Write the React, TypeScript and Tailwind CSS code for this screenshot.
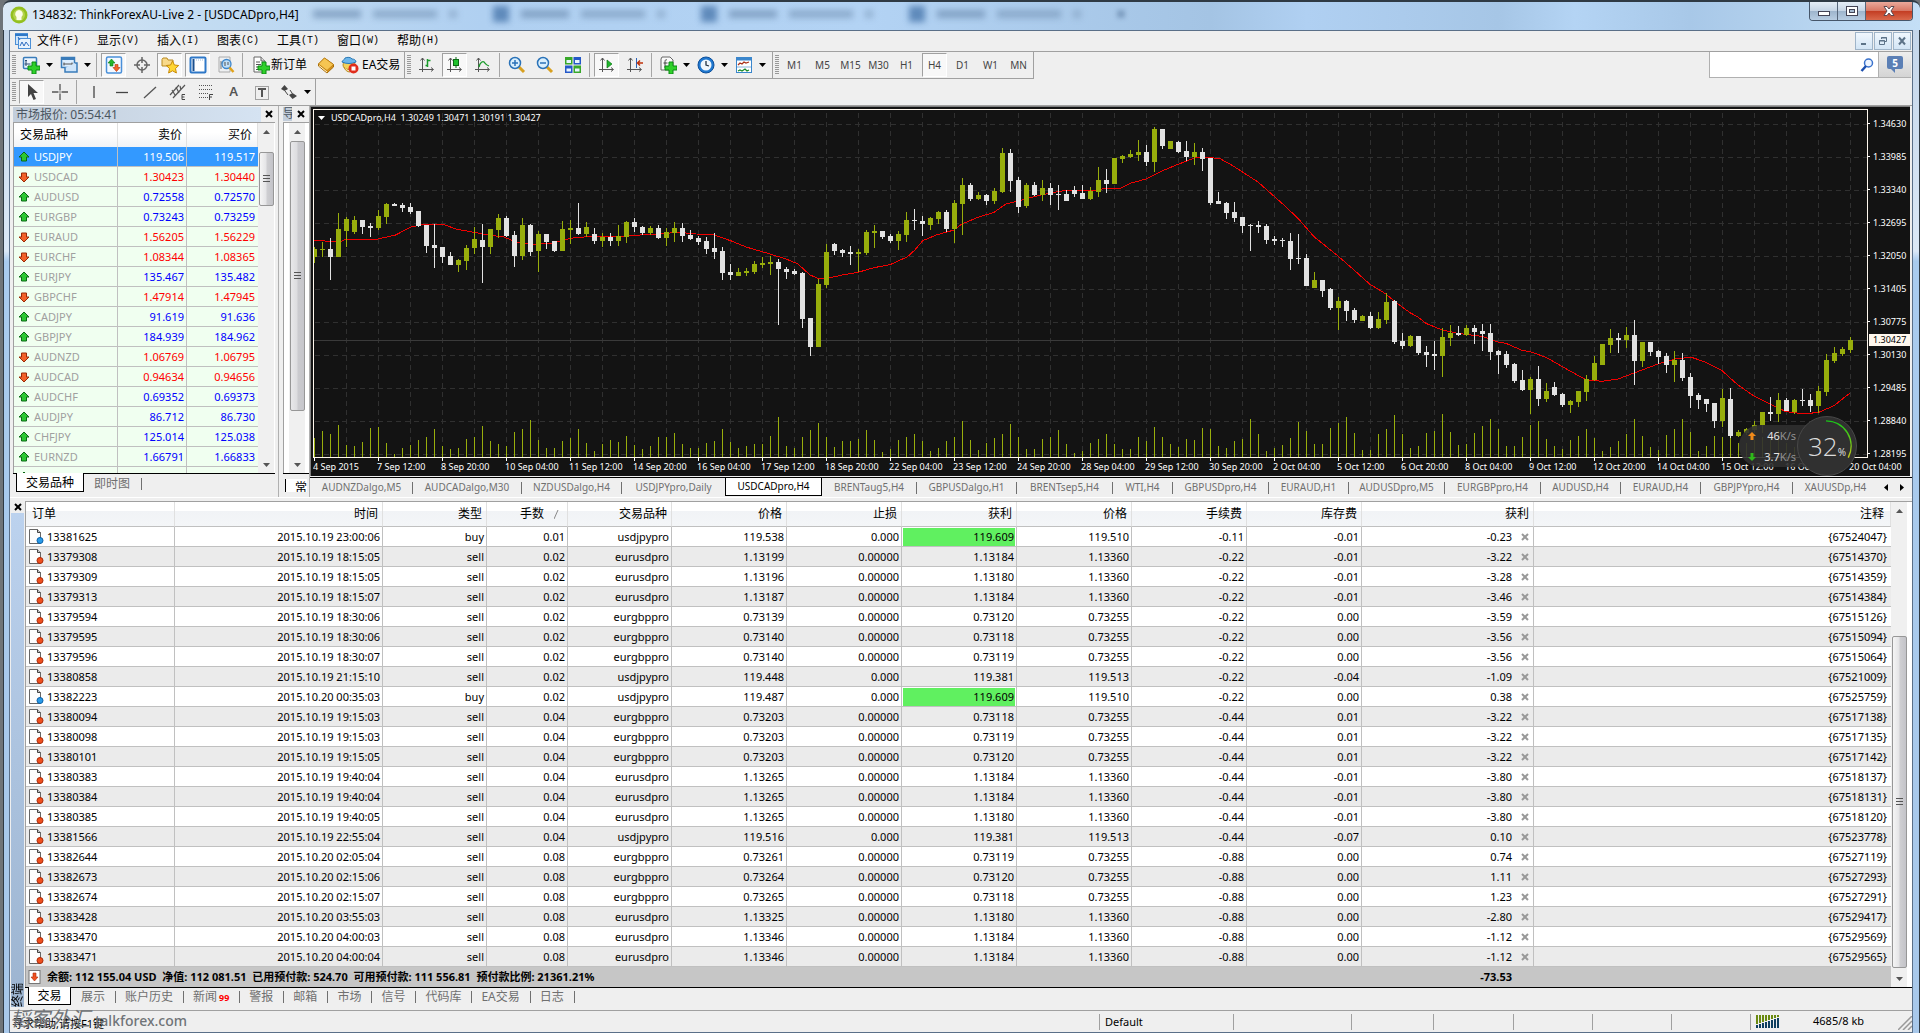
import React from "react";

type Candle = [kind: "u" | "d", high: number, top: number, bottom: number, low: number, volume: number];

/* Chart data: vertical values are in thirds of a pixel below the pane's base line. */
const CANDLES: Candle[] = [
  ["u", 440, 447, 471, 488, 1015], ["u", 427, 447, 450, 471, 993], ["d", 414, 447, 471, 540, 1002], ["u", 339, 387, 471, 471, 975],
  ["u", 351, 357, 393, 441, 1035], ["u", 348, 360, 396, 402, 1038], ["d", 360, 360, 381, 402, 1026], ["d", 369, 378, 384, 411, 984],
  ["u", 330, 348, 384, 390, 981], ["u", 309, 312, 351, 372, 1030], ["d", 309, 312, 318, 318, 1062], ["d", 309, 315, 324, 336, 1045],
  ["d", 309, 321, 336, 342, 1035], ["d", 333, 333, 378, 381, 1020], ["d", 375, 375, 438, 459, 1011], ["d", 372, 435, 444, 504, 987],
  ["d", 441, 441, 471, 489, 1038], ["d", 456, 468, 495, 495, 1047], ["u", 477, 480, 495, 516, 1044], ["u", 435, 444, 483, 510, 1017],
  ["u", 381, 417, 444, 462, 1011], ["d", 372, 420, 441, 549, 978], ["u", 387, 387, 441, 462, 1023], ["u", 342, 354, 390, 414, 1032],
  ["d", 348, 354, 408, 411, 1038], ["d", 393, 405, 468, 501, 996], ["u", 354, 375, 468, 480, 987], ["d", 372, 375, 456, 468, 960],
  ["u", 393, 402, 453, 516, 1020], ["d", 402, 402, 426, 447, 1044], ["d", 423, 423, 453, 456, 1045], ["u", 363, 387, 453, 453, 1023],
  ["u", 360, 384, 390, 432, 1014], ["d", 309, 384, 402, 405, 987], ["u", 366, 381, 402, 411, 1029], ["d", 384, 402, 423, 432, 1053],
  ["u", 399, 411, 423, 441, 1032], ["d", 399, 411, 423, 438, 1020], ["u", 375, 408, 423, 438, 1026], ["u", 363, 366, 411, 429, 1008],
  ["d", 354, 366, 381, 396, 1035], ["d", 378, 381, 399, 405, 1047], ["u", 378, 384, 399, 405, 1038], ["d", 375, 384, 414, 417, 1011],
  ["u", 384, 396, 414, 438, 1011], ["u", 366, 384, 399, 426, 999], ["d", 369, 384, 408, 426, 1032], ["d", 390, 405, 417, 420, 1044],
  ["d", 408, 414, 426, 435, 1044], ["d", 411, 423, 447, 462, 1029], ["d", 399, 444, 456, 477, 1023], ["d", 441, 453, 519, 540, 987],
  ["d", 492, 516, 525, 540, 1026], ["u", 504, 516, 528, 528, 1044], ["u", 504, 513, 519, 528, 1038], ["u", 483, 492, 516, 522, 1032],
  ["u", 471, 489, 495, 504, 1032], ["u", 468, 486, 492, 525, 1008], ["d", 477, 486, 507, 675, 951], ["d", 501, 507, 516, 537, 1038],
  ["d", 507, 513, 522, 525, 1044], ["d", 516, 519, 657, 684, 1011], ["d", 654, 654, 741, 768, 990], ["u", 537, 552, 741, 741, 969],
  ["u", 432, 456, 555, 564, 1011], ["d", 429, 432, 453, 465, 1041], ["d", 447, 450, 459, 471, 1023], ["d", 438, 456, 462, 495, 1023],
  ["u", 447, 456, 462, 516, 1017], ["u", 390, 396, 459, 465, 990], ["u", 375, 393, 399, 444, 1020], ["d", 393, 393, 411, 417, 1056],
  ["d", 402, 408, 423, 429, 1047], ["u", 393, 402, 423, 450, 1020], ["u", 336, 360, 405, 426, 1011], ["d", 327, 360, 363, 390, 1002],
  ["d", 348, 363, 372, 408, 1023], ["u", 351, 354, 375, 390, 1053], ["u", 333, 336, 357, 372, 1044], ["d", 330, 336, 387, 396, 1023],
  ["u", 300, 309, 387, 429, 1011], ["u", 234, 255, 312, 405, 963], ["d", 249, 255, 297, 303, 1020], ["u", 276, 285, 297, 300, 1050],
  ["d", 282, 285, 303, 315, 1029], ["u", 264, 273, 303, 312, 1014], ["u", 144, 159, 276, 279, 1002], ["d", 147, 159, 243, 276, 972],
  ["d", 231, 240, 321, 339, 1011], ["u", 249, 255, 318, 324, 1047], ["d", 246, 255, 285, 288, 1047], ["u", 240, 264, 285, 303, 1017],
  ["d", 249, 264, 285, 315, 1011], ["d", 255, 282, 285, 330, 990], ["d", 270, 282, 303, 303, 1032], ["d", 258, 270, 282, 291, 1059],
  ["d", 255, 279, 297, 297, 1053], ["u", 261, 273, 297, 300, 1029], ["u", 201, 240, 276, 291, 1017], ["d", 207, 240, 252, 279, 1002],
  ["u", 174, 174, 252, 252, 1032], ["u", 165, 168, 177, 189, 1047], ["u", 150, 162, 171, 174, 1047], ["u", 120, 156, 165, 183, 1011],
  ["d", 135, 156, 186, 198, 1023], ["u", 81, 87, 186, 216, 981], ["d", 87, 87, 138, 147, 1011], ["u", 123, 123, 147, 147, 1032],
  ["d", 123, 126, 156, 159, 1041], ["d", 123, 153, 171, 183, 1017], ["u", 129, 156, 171, 195, 1020], ["d", 144, 156, 177, 213, 984],
  ["d", 174, 174, 309, 315, 987], ["d", 276, 303, 312, 312, 1038], ["d", 306, 309, 339, 357, 1044], ["d", 306, 336, 354, 366, 1023],
  ["d", 351, 351, 378, 399, 1017], ["d", 372, 375, 378, 453, 957], ["d", 363, 375, 381, 399, 1002], ["d", 372, 378, 420, 432, 1053],
  ["d", 408, 417, 423, 435, 1045], ["d", 414, 420, 423, 441, 1035], ["d", 399, 423, 477, 510, 1014], ["d", 402, 474, 477, 492, 966],
  ["d", 462, 474, 558, 558, 993], ["u", 516, 540, 564, 564, 1032], ["d", 540, 540, 573, 591, 1032], ["d", 564, 567, 624, 630, 984],
  ["u", 591, 603, 624, 690, 969], ["d", 600, 603, 633, 663, 951], ["d", 624, 630, 660, 669, 999], ["u", 645, 648, 663, 663, 1050],
  ["d", 636, 648, 684, 687, 1050], ["u", 636, 657, 684, 687, 1002], ["u", 579, 606, 660, 672, 987], ["d", 600, 603, 726, 732, 945],
  ["d", 699, 723, 738, 747, 1002], ["u", 705, 708, 738, 741, 1044], ["d", 708, 708, 759, 765, 1038], ["d", 738, 756, 765, 801, 999],
  ["d", 723, 762, 768, 810, 993], ["u", 684, 711, 768, 831, 942], ["u", 675, 699, 714, 738, 996], ["d", 678, 699, 705, 708, 1035],
  ["u", 675, 684, 705, 708, 1032], ["d", 675, 684, 696, 732, 999], ["d", 672, 693, 702, 753, 978], ["d", 672, 699, 756, 780, 957],
  ["d", 750, 753, 765, 822, 987], ["d", 753, 762, 795, 804, 1038], ["d", 789, 792, 843, 849, 1038], ["d", 810, 840, 870, 873, 1011],
  ["u", 831, 837, 870, 942, 975], ["d", 798, 837, 897, 918, 963], ["u", 849, 873, 897, 906, 1017], ["d", 846, 861, 885, 888, 1038],
  ["d", 879, 882, 915, 921, 1047], ["u", 900, 903, 915, 939, 1020], ["u", 873, 873, 906, 921, 1008], ["u", 825, 837, 876, 903, 987],
  ["u", 768, 789, 840, 843, 1014], ["u", 732, 732, 795, 795, 1053], ["u", 687, 714, 735, 759, 1041], ["d", 699, 714, 720, 759, 1023],
  ["u", 681, 705, 720, 744, 1002], ["d", 660, 705, 783, 855, 957], ["u", 726, 726, 783, 801, 1008], ["d", 726, 726, 756, 768, 1041],
  ["d", 750, 753, 771, 792, 1050], ["d", 759, 768, 795, 819, 1005], ["u", 753, 780, 795, 846, 987], ["d", 759, 780, 834, 843, 957],
  ["d", 819, 831, 888, 924, 996], ["d", 879, 885, 900, 927, 1053], ["d", 897, 897, 912, 936, 1038], ["d", 909, 909, 963, 984, 1008],
  ["u", 867, 894, 963, 981, 1011], ["d", 864, 897, 1008, 1014, 1005], ["u", 990, 996, 1008, 1011, 1030], ["u", 984, 987, 999, 1005, 1030],
  ["u", 963, 975, 990, 999, 1020], ["u", 936, 936, 975, 999, 1010], ["d", 891, 936, 942, 963, 1010], ["u", 879, 900, 942, 966, 990],
  ["d", 894, 900, 933, 933, 1030], ["u", 897, 900, 936, 942, 1040], ["d", 867, 900, 903, 918, 1020], ["d", 882, 900, 918, 936, 1030],
  ["u", 858, 873, 918, 939, 1010], ["u", 762, 780, 876, 888, 1000], ["u", 741, 759, 783, 789, 1035], ["u", 741, 747, 762, 768, 1045],
  ["u", 711, 720, 750, 759, 1055],
];

const AVERAGE: [index: number, value: number][] = [
  [0, 421], [2, 424], [3.5, 423], [4, 417], [8, 417], [10.2, 405], [12.1, 381], [13.7, 373], [16.1, 373], [17.9, 388], [20, 397], [22, 406],
  [23.7, 411], [25.5, 428], [27.5, 433], [30, 429], [32, 415], [35, 408], [38, 411], [40, 406], [43, 402], [45.6, 397], [47.8, 402], [50, 405],
  [52.3, 424], [54, 441], [57, 462], [59, 477], [60.5, 492], [62, 525], [63, 535], [64, 536], [66, 525], [68, 517], [70, 503], [72, 494],
  [74.2, 470], [75.1, 450], [76.1, 422], [77.8, 405], [80, 390], [81, 372], [83, 352], [85, 337], [86.5, 312], [88, 303], [90, 290], [92, 279],
  [94, 271], [97, 273], [98.8, 266], [100.6, 267], [102, 250], [104, 237], [106, 213], [108, 193], [110.4, 171], [113.2, 175], [114.9, 198],
  [118, 246], [121, 310], [123, 355], [125, 410], [128, 468], [130, 510], [132, 553], [134, 582], [135, 603], [137, 638], [138, 651], [139, 670],
  [141, 690], [143, 700], [146, 709], [148, 726], [149, 730], [151, 751], [152, 755], [154, 772], [157, 813], [159, 839], [161, 844], [163, 837],
  [165, 819], [168, 792], [170.3, 776], [172.2, 772], [174, 787], [176, 812], [178, 855], [180, 888], [182, 912], [184, 935], [186, 941],
  [188, 938], [190, 917], [192, 879],
];

const PRICES = ["1.34630", "1.33985", "1.33340", "1.32695", "1.32050", "1.31405", "1.30775", "1.30130", "1.29485", "1.28840", "1.28195"];
const DATES = [
  "4 Sep 2015", "7 Sep 12:00", "8 Sep 20:00", "10 Sep 04:00", "11 Sep 12:00", "14 Sep 20:00", "16 Sep 04:00", "17 Sep 12:00", "18 Sep 20:00",
  "22 Sep 04:00", "23 Sep 12:00", "24 Sep 20:00", "28 Sep 04:00", "29 Sep 12:00", "30 Sep 20:00", "2 Oct 04:00", "5 Oct 12:00", "6 Oct 20:00",
  "8 Oct 04:00", "9 Oct 12:00", "12 Oct 20:00", "14 Oct 04:00", "15 Oct 12:00", "16 Oct 20:00", "20 Oct 04:00",
];

const CHART_TABS: [string, string][] = [
  ["AUDNZDalgo,M5", "w-[102px]"], ["AUDCADalgo,M30", "w-[109px]"], ["NZDUSDalgo,H4", "w-[100px]"], ["USDJPYpro,Daily", "w-[103px]"],
  ["USDCADpro,H4", "w-[97px]"], ["BRENTaug5,H4", "w-[95px]"], ["GBPUSDalgo,H1", "w-[100px]"], ["BRENTsep5,H4", "w-[96px]"],
  ["WTI,H4", "w-[60px]"], ["GBPUSDpro,H4", "w-[96px]"], ["EURAUD,H1", "w-[80px]"], ["AUDUSDpro,M5", "w-[96px]"],
  ["EURGBPpro,H4", "w-[96px]"], ["AUDUSD,H4", "w-[80px]"], ["EURAUD,H4", "w-[80px]"], ["GBPJPYpro,H4", "w-[92px]"], ["XAUUSDp,H4", "w-[85px]"],
];

const QUOTES: [string, string, string, boolean][] = [
  ["USDJPY", "119.506", "119.517", true], ["USDCAD", "1.30423", "1.30440", false], ["AUDUSD", "0.72558", "0.72570", true],
  ["EURGBP", "0.73243", "0.73259", true], ["EURAUD", "1.56205", "1.56229", false], ["EURCHF", "1.08344", "1.08365", false],
  ["EURJPY", "135.467", "135.482", true], ["GBPCHF", "1.47914", "1.47945", false], ["CADJPY", "91.619", "91.636", true],
  ["GBPJPY", "184.939", "184.962", true], ["AUDNZD", "1.06769", "1.06795", false], ["AUDCAD", "0.94634", "0.94656", false],
  ["AUDCHF", "0.69352", "0.69373", true], ["AUDJPY", "86.712", "86.730", true], ["CHFJPY", "125.014", "125.038", true],
  ["EURNZD", "1.66791", "1.66833", true], ["", "", "", true],
];

const ORDERS = `13381625|2015.10.19 23:00:06|buy|0.01|usdjpypro|119.538|0.000|119.609|119.510|-0.11|-0.01|-0.23|{67524047}
13379308|2015.10.19 18:15:05|sell|0.02|eurusdpro|1.13199|0.00000|1.13184|1.13360|-0.22|-0.01|-3.22|{67514370}
13379309|2015.10.19 18:15:05|sell|0.02|eurusdpro|1.13196|0.00000|1.13180|1.13360|-0.22|-0.01|-3.28|{67514359}
13379313|2015.10.19 18:15:07|sell|0.02|eurusdpro|1.13187|0.00000|1.13184|1.13360|-0.22|-0.01|-3.46|{67514384}
13379594|2015.10.19 18:30:06|sell|0.02|eurgbppro|0.73139|0.00000|0.73120|0.73255|-0.22|0.00|-3.59|{67515126}
13379595|2015.10.19 18:30:06|sell|0.02|eurgbppro|0.73140|0.00000|0.73118|0.73255|-0.22|0.00|-3.56|{67515094}
13379596|2015.10.19 18:30:07|sell|0.02|eurgbppro|0.73140|0.00000|0.73119|0.73255|-0.22|0.00|-3.56|{67515064}
13380858|2015.10.19 21:15:10|sell|0.02|usdjpypro|119.448|0.000|119.381|119.513|-0.22|-0.04|-1.09|{67521009}
13382223|2015.10.20 00:35:03|buy|0.02|usdjpypro|119.487|0.000|119.609|119.510|-0.22|0.00|0.38|{67525759}
13380094|2015.10.19 19:15:03|sell|0.04|eurgbppro|0.73203|0.00000|0.73118|0.73255|-0.44|0.01|-3.22|{67517138}
13380098|2015.10.19 19:15:03|sell|0.04|eurgbppro|0.73203|0.00000|0.73119|0.73255|-0.44|0.01|-3.22|{67517135}
13380101|2015.10.19 19:15:05|sell|0.04|eurgbppro|0.73203|0.00000|0.73120|0.73255|-0.44|0.01|-3.22|{67517142}
13380383|2015.10.19 19:40:04|sell|0.04|eurusdpro|1.13265|0.00000|1.13184|1.13360|-0.44|-0.01|-3.80|{67518137}
13380384|2015.10.19 19:40:04|sell|0.04|eurusdpro|1.13265|0.00000|1.13184|1.13360|-0.44|-0.01|-3.80|{67518131}
13380385|2015.10.19 19:40:05|sell|0.04|eurusdpro|1.13265|0.00000|1.13180|1.13360|-0.44|-0.01|-3.80|{67518120}
13381566|2015.10.19 22:55:04|sell|0.04|usdjpypro|119.516|0.000|119.381|119.513|-0.44|-0.07|0.10|{67523778}
13382644|2015.10.20 02:05:04|sell|0.08|eurgbppro|0.73261|0.00000|0.73119|0.73255|-0.88|0.00|0.74|{67527119}
13382673|2015.10.20 02:15:06|sell|0.08|eurgbppro|0.73264|0.00000|0.73120|0.73255|-0.88|0.00|1.11|{67527293}
13382674|2015.10.20 02:15:07|sell|0.08|eurgbppro|0.73265|0.00000|0.73118|0.73255|-0.88|0.00|1.23|{67527291}
13383428|2015.10.20 03:55:03|sell|0.08|eurusdpro|1.13325|0.00000|1.13180|1.13360|-0.88|0.00|-2.80|{67529417}
13383470|2015.10.20 04:00:03|sell|0.08|eurusdpro|1.13346|0.00000|1.13184|1.13360|-0.88|0.00|-1.12|{67529569}
13383471|2015.10.20 04:00:04|sell|0.08|eurusdpro|1.13346|0.00000|1.13184|1.13360|-0.88|0.00|-1.12|{67529565}`
  .split("\n")
  .map((line) => line.split("|"));

const COLUMNS: [string, string][] = [
  ["订单", "w-[149px]"], ["时间", "w-[208px]"], ["类型", "w-[104px]"], ["手数", "w-[81px]"], ["交易品种", "w-[104px]"],
  ["价格", "w-[115px]"], ["止损", "w-[115px]"], ["获利", "w-[115px]"], ["价格", "w-[115px]"], ["手续费", "w-[115px]"],
  ["库存费", "w-[115px]"], ["获利", "w-[172px]"], ["注释", ""],
];

const Svg = ({ children, w = 18, h = 18 }: { children: React.ReactNode; w?: number; h?: number }) => (
  <svg width={w} height={h} viewBox={`0 0 ${w} ${h}`} className="shrink-0" aria-hidden="true">{children}</svg>
);

const Plus = () => <path d="M10 6h4v4h4v4h-4v4h-4v-4H6v-4h4z" fill="#2fd02a" stroke="#0b8a12" />;
const Axes = () => (
  <path d="M4.500 2v14M1 13.500h14M2.500 4.500l2-2.500 2 2.500M13 11.500l2.500 2-2.500 2" fill="none" stroke="#555" />
);

const icons = {
  app: <Svg><circle cx="9" cy="9" r="8.500" fill="#93c01f" /><circle cx="9" cy="9" r="6" fill="#b4d34c" /><path d="M9 4a4 4 0 0 1 2.500 7v3h-5v-3A4 4 0 0 1 9 4z" fill="#fbfde8" /></Svg>,
  doc: <Svg><rect x="1.500" y="1.500" width="12" height="11" fill="#cfe5fa" stroke="#4b8fd6" /><path d="M1 3h13" stroke="#2e78c8" strokeWidth="2" /><rect x="4.500" y="6.500" width="12" height="10" fill="#e7f2fd" stroke="#4b8fd6" /><path d="M6 14l2-4 2 4 2-4 3 4M4 5l2 3" fill="none" stroke="#2e6cc0" /></Svg>,
  newChart: <Svg><rect x="1.500" y="1.500" width="13" height="11" rx="1" fill="#eef6ff" stroke="#3a7cba" strokeWidth="1.500" /><path d="M4 4v6M2.500 8h6M4 4l-1 1M4 4l1 1" stroke="#2b4a70" fill="none" /><Plus /></Svg>,
  profiles: <Svg><rect x="1.500" y="1.500" width="13" height="10" fill="#ddeefe" stroke="#3a7cba" strokeWidth="1.500" /><path d="M1 3h14" stroke="#3a7cba" strokeWidth="2" /><path d="M3.500 8h9M4 6.500v3M12 6.500v3" stroke="#555" /><path d="M5 12v4h12V7h-2" fill="#cfe5fa" stroke="#3a7cba" strokeWidth="1.500" /></Svg>,
  market: <Svg><rect x="1.500" y="1" width="15" height="16" rx="1.500" fill="#f4f9ff" stroke="#4a90d9" strokeWidth="1.500" /><path d="M6.500 3l3.500 4H8v3H5V7H3z" fill="#22b52a" stroke="#0b7a14" strokeWidth=".6" /><path d="M11.500 15.500L15 11.500h-2v-3h-3v3H8z" fill="#f0642a" stroke="#b53208" strokeWidth=".6" /></Svg>,
  cross: <Svg><circle cx="9" cy="9" r="5" fill="none" stroke="#666" strokeWidth="1.500" /><path d="M9 1v6M9 11v6M1 9h6M11 9h6" stroke="#666" strokeWidth="1.500" /></Svg>,
  navigator: <Svg><path d="M1 3.500l1-1.500h4l1 2h5v6H1z" fill="#f8d98a" stroke="#b98a20" /><path d="M11.500 5l1.900 4 4.300.5-3.200 3 .9 4.500-3.900-2.200L7.600 17l.9-4.500-3.200-3 4.300-.5z" fill="#ffd633" stroke="#c88a08" /></Svg>,
  terminal: <Svg><rect x="1.500" y="1.500" width="15" height="15" rx="1" fill="#fff" stroke="#2e78c8" strokeWidth="2" /><path d="M4.500 3v12" stroke="#1a4f8f" strokeWidth="2" /><path d="M7 4h8" stroke="#9ab8d8" strokeDasharray="1 1" /></Svg>,
  tester: <Svg><path d="M2 1h11v15H2z" fill="#eef0f2" stroke="#aaa" /><path d="M4 5v8M4 7h2M7 4v4" stroke="#777" /><circle cx="9.500" cy="8" r="4.500" fill="#b5dcfa" fillOpacity=".8" stroke="#3c86cc" strokeWidth="1.300" /><path d="M8 10V6M11 9V6" stroke="#555" /><path d="M12.500 11.500l4 4.500" stroke="#e0a21a" strokeWidth="2.500" /></Svg>,
  order: <Svg><path d="M2 1h7l4 4v11H2z" fill="#fff" stroke="#666" /><path d="M9 1v4h4" fill="#ddd" stroke="#666" /><path d="M4 6h4M4 8.500h5M4 11h3M4 13.500h3" stroke="#555" /><Plus /></Svg>,
  book: <Svg><path d="M7.500 2l9 6.500v2.500L10 17 1.500 10V8z" fill="#d9921a" stroke="#a66c08" /><path d="M7.500 2l9 6.500-6.500 6L1.500 8z" fill="#f6c552" stroke="#b87a10" strokeWidth=".7" /><path d="M2 9.500l8 6.500" stroke="#fff3c8" /></Svg>,
  expert: <Svg><ellipse cx="8" cy="9" rx="6" ry="4.500" fill="#f3d25a" stroke="#b98a20" /><path d="M1 6c0-2 3-2 3-4 2-1 6-1 7 1 2 0 4 1 4 3-4 2-10 2-14 0z" fill="#6cb6ea" stroke="#2a78b4" /><path d="M3 11c1 3 3 5 6 5" stroke="#b98a20" fill="#f8e49a" /><circle cx="12.500" cy="12.500" r="5" fill="#e02c1c" /><rect x="10.500" y="10.500" width="4" height="4" fill="#fff" /></Svg>,
  bars: <Svg><Axes /><path d="M9.500 3v8M7.500 9.500h2M9.500 4.500h3" stroke="#1a9a2a" strokeWidth="1.500" /></Svg>,
  candles: <Svg><Axes /><path d="M10 1v11" stroke="#0a6a14" /><rect x="7.500" y="3.500" width="5" height="6" fill="#1fc22c" stroke="#0a6a14" /></Svg>,
  line: <Svg><Axes /><path d="M5 11c1-5 4-6 5-5s2 3 5 4" fill="none" stroke="#1a9a2a" strokeWidth="1.300" /></Svg>,
  zoomIn: <Svg><path d="M11 11l5 5" stroke="#d8a020" strokeWidth="3" /><circle cx="7" cy="7" r="5.500" fill="#d9effd" stroke="#2a72b8" strokeWidth="1.500" /><path d="M4 7h6M7 4v6" stroke="#2a72b8" strokeWidth="1.500" /></Svg>,
  zoomOut: <Svg><path d="M11 11l5 5" stroke="#d8a020" strokeWidth="3" /><circle cx="7" cy="7" r="5.500" fill="#d9effd" stroke="#2a72b8" strokeWidth="1.500" /><path d="M4 7h6" stroke="#2a72b8" strokeWidth="1.500" /></Svg>,
  tile: <Svg><path d="M1 1h7.500v7.500H1zM9.500 9.500H17V17H9.500z" fill="#38a82a" /><path d="M9.500 1H17v7.500H9.500zM1 9.500h7.500V17H1z" fill="#2458c8" /><path d="M2.500 4h4.500v3H2.500zM11 4h4.500v3H11zM2.500 12.500h4.500v3H2.500zM11 12.500h4.500v3H11z" fill="#e8f4ff" /></Svg>,
  scroll: <Svg><Axes /><path d="M9 4l5 4-5 4z" fill="#1fb52c" stroke="#0b7a14" strokeWidth=".7" /></Svg>,
  shift: <Svg><Axes /><path d="M10.500 2v10" stroke="#2a62b8" /><path d="M17 7h-5M14 4.500L11.500 7 14 9.500" stroke="#c0320a" strokeWidth="1.500" fill="none" /></Svg>,
  indicator: <Svg><path d="M3 1h8l3 3v10H2V3z" fill="#fafafa" stroke="#666" /><path d="M8 4c-2-1-2 1-2 3v5M4.500 7h4" fill="none" stroke="#444" /><Plus /></Svg>,
  clock: <Svg><circle cx="9" cy="9" r="8" fill="#1f78d0" stroke="#0d4f9a" /><circle cx="9" cy="9" r="5.500" fill="#eef6fd" /><path d="M9 5v4l3 1" fill="none" stroke="#234" strokeWidth="1.300" /></Svg>,
  template: <Svg><rect x="1.500" y="1.500" width="15" height="15" fill="#fff" stroke="#3a86cc" /><path d="M1 3h16" stroke="#3a86cc" strokeWidth="3" /><path d="M2 11h14" stroke="#88b4dc" /><path d="M3 9l2-2 2 1 2-2 2 1 3-1" stroke="#a8321a" fill="none" strokeWidth="1.300" /><path d="M3 15l2-1 2 1 3-2 2 2 2-1" stroke="#1a8a2a" fill="none" strokeWidth="1.300" /></Svg>,
  cursor: <Svg><path d="M5 1v13l3-3 2.500 6 2.500-1-2.500-6H15z" fill="#444" /></Svg>,
  crosshair: <Svg><path d="M9 1v6.500M9 10.500V17M1 9h6.500M10.500 9H17M8.500 9h1" stroke="#555" strokeWidth="1.300" /></Svg>,
  vline: <Svg><path d="M9 3v12" stroke="#444" strokeWidth="1.300" /></Svg>,
  hline: <Svg><path d="M3 9.500h12" stroke="#444" strokeWidth="1.300" /></Svg>,
  diag: <Svg><path d="M3 15L15 4" stroke="#555" strokeWidth="1.300" /></Svg>,
  channel: <Svg><path d="M1 12L10 2M4 15L16 2M3 7l3 5M7 4l3 6M11 3l1 4" stroke="#555" strokeWidth="1.200" /><path d="M16 11.500h-3v5h3M13 14h2.500" fill="none" stroke="#444" /></Svg>,
  fibo: <Svg><path d="M2 2.500h13M2 6.500h13M2 10.500h9M2 14.500h9" stroke="#555" strokeDasharray="1 1" /><path d="M16 11.500h-3.500V17M12.500 14H15" fill="none" stroke="#444" /></Svg>,
  label: <Svg><rect x="2.500" y="3.500" width="13" height="13" fill="none" stroke="#555" strokeDasharray="1 1" /><path d="M5 6h8M9 6v8" stroke="#555" strokeWidth="2" /></Svg>,
  arrows: <Svg><path d="M1 6l3.500-4L8 6 4.500 8zM9 12l3.500-2 4.500 3-4.500 3z" fill="#444" /><path d="M5 8l3 4M10 7l2 3" stroke="#444" /></Svg>,
};

const Caret = () => <Svg w={7} h={4}><path d="M0 0h7L3.500 4z" fill="#000" /></Svg>;
const Grip = () => <span className="ml-[2px] h-5 w-[4px] shrink-0 bg-[repeating-linear-gradient(180deg,#999_0_1px,#efefef_1px_2px)]" />;
const Sep = () => <span className="flex h-6 w-[3px] shrink-0 justify-center"><span className="w-px bg-[#a5a5a5]" /></span>;

const Tool = ({ label, icon, pressed = false }: { label: string; icon: React.ReactNode; pressed?: boolean }) => (
  <button
    type="button"
    aria-label={label}
    className={
      pressed
        ? "flex h-6 w-[25px] shrink-0 items-center justify-center border border-[#a0a0a0] border-r-white border-b-white bg-[#f8f8f8]"
        : "flex h-6 w-[25px] shrink-0 items-center justify-center"
    }
  >
    {icon}
  </button>
);

const Split = ({ label, icon }: { label: string; icon: React.ReactNode }) => (
  <button type="button" aria-label={label} className="flex h-6 w-[35px] shrink-0 items-center justify-between pr-px pl-[3px]">
    {icon}
    <Caret />
  </button>
);

const CloseX = () => <Svg w={8} h={8}><path d="M1 1l6 6M7 1L1 7" stroke="#000" strokeWidth="2" /></Svg>;

const Ghost = ({ icon = true }: { icon?: boolean }) => (
  <span className="flex w-[208px] items-center gap-3 blur-[3px]">
    <span className={icon ? "h-4 w-4 bg-[#3c6ca4]" : "h-4 w-4"} />
    <span className="h-2 w-12 bg-[#6f8fb3]" />
    <span className="h-2 w-16 bg-[#7c9bbd]" />
    <span className="h-2 w-2 bg-[#86a4c4]" />
  </span>
);

function TitleBar() {
  return (
    <header className="relative flex h-[30px] items-start overflow-hidden rounded-t-lg border-t-2 border-[#2f3a44] bg-[linear-gradient(90deg,#dbe9f5_0%,#c3dcf2_10%,#b0d0f1_25%,#b3d3f4_45%,#a4c4e4_63%,#b0d0f2_68%,#a6c6e6_78%,#b4d4f4_82%,#a8c8e8_88%,#c4dff6_100%)] pl-[7px]">
      <div className="absolute top-[3px] left-[282px] flex h-[18px] items-center opacity-70">
        <Ghost icon={false} /><Ghost /><Ghost /><Ghost />
        <span className="h-2 w-2 bg-[#6f8fb3] blur-[2px]" />
      </div>
      <div className="relative mt-1 flex items-center gap-[4px]">
        {icons.app}
        <h1 className="text-[12px] leading-[18px] text-black">134832: ThinkForexAU-Live 2 - [USDCADpro,H4]</h1>
      </div>
      <div className="relative mr-[7px] ml-auto flex h-[19px] overflow-hidden rounded-b border border-t-0 border-[#46566a]">
        <button type="button" aria-label="最小化" className="flex w-7 items-center justify-center border-r border-[#56667a] bg-[linear-gradient(180deg,#e4edf6_0%,#c6d5e5_48%,#9db4cc_50%,#b8cde2_100%)]">
          <Svg w={12} h={12}><rect x=".5" y="6.500" width="11" height="4" fill="#fff" stroke="#445" /></Svg>
        </button>
        <button type="button" aria-label="还原" className="flex w-7 items-center justify-center border-r border-[#56667a] bg-[linear-gradient(180deg,#e4edf6_0%,#c6d5e5_48%,#9db4cc_50%,#b8cde2_100%)]">
          <Svg w={12} h={12}><rect x=".5" y="1.500" width="11" height="9" fill="#fff" stroke="#445" /><rect x="3.500" y="4.500" width="5" height="3" fill="#a8bcd2" stroke="#445" /></Svg>
        </button>
        <button type="button" aria-label="关闭" className="flex w-[46px] items-center justify-center bg-[linear-gradient(180deg,#e9a99b_0%,#d77865_48%,#c33c22_50%,#d9694c_100%)]">
          <Svg w={12} h={12}><path d="M1 1.500h3l2 2.500 2-2.500h3L8 6l3 4.500H8L6 8l-2 2.500H1L4 6z" fill="#fff" stroke="#5b4a52" /></Svg>
        </button>
      </div>
    </header>
  );
}

const MENUS: [string, string][] = [["文件", "(F)"], ["显示", "(V)"], ["插入", "(I)"], ["图表", "(C)"], ["工具", "(T)"], ["窗口", "(W)"], ["帮助", "(H)"]];

function MenuBar() {
  const mdi = "flex h-[18px] w-[18px] items-center justify-center border border-[#9fb4c8] bg-[linear-gradient(180deg,#f0f7fd,#d3e5f5)]";
  return (
    <nav className="flex h-[21px] items-center border-b border-[#a0a0a0] bg-[#efefef] pl-[4px]">
      {icons.doc}
      <ul className="ml-[5px] flex gap-[18px]">
        {MENUS.map(([name, key]) => (
          <li key={name}>
            <button type="button" className="flex w-[42px] items-center text-[12px] leading-5 whitespace-nowrap">
              {name}
              <span className="text-[10px] [font-family:'Liberation_Mono',monospace]">{key}</span>
            </button>
          </li>
        ))}
      </ul>
      <div className="mr-px ml-auto flex gap-px">
        <button type="button" aria-label="最小化图表" className={mdi}><Svg w={10} h={10}><path d="M2 8h5" stroke="#5d7388" strokeWidth="2" /></Svg></button>
        <button type="button" aria-label="还原图表" className={mdi}><Svg w={10} h={10}><path d="M3.500 3V1.500h5v4H7M3 2h6M1.500 4.500h5v4h-5zM1 5h6" fill="none" stroke="#5d7388" /></Svg></button>
        <button type="button" aria-label="关闭图表" className={mdi}><Svg w={10} h={10}><path d="M2 1.500l6 7M8 1.500l-6 7" stroke="#5d7388" strokeWidth="2" /></Svg></button>
      </div>
    </nav>
  );
}

function Toolbars() {
  return (
    <div className="border-b border-[#a0a0a0] bg-[#efefef]">
      <div className="flex h-[27px]">
        <div className="flex items-center gap-[3px] border-r border-b border-[#a0a0a0] pr-px">
          <Grip />
          <Split label="新图表" icon={icons.newChart} />
          <Split label="图表配置" icon={icons.profiles} />
          <Sep />
          <Tool label="市场报价" icon={icons.market} pressed />
          <Tool label="数据窗口" icon={icons.cross} />
          <Tool label="导航" icon={icons.navigator} pressed />
          <Tool label="终端" icon={icons.terminal} pressed />
          <Tool label="策略测试" icon={icons.tester} />
          <Sep />
          <button type="button" className="flex w-[63px] items-center gap-px pl-[5px] text-[12px] whitespace-nowrap">{icons.order}新订单</button>
          <Tool label="语言编辑器" icon={icons.book} />
          <button type="button" className="flex w-[62px] items-center gap-[3px] text-[12px] whitespace-nowrap">{icons.expert}EA交易</button>
        </div>
        <div className="flex items-center gap-[3px] border-r border-b border-[#a0a0a0] pr-[5px]">
          <Grip />
          <Tool label="柱状图" icon={icons.bars} />
          <Tool label="蜡烛图" icon={icons.candles} pressed />
          <Tool label="折线图" icon={icons.line} />
          <Sep />
          <Tool label="放大" icon={icons.zoomIn} />
          <Tool label="缩小" icon={icons.zoomOut} />
          <Tool label="平铺窗口" icon={icons.tile} />
          <Sep />
          <Tool label="自动滚动" icon={icons.scroll} pressed />
          <Tool label="图表平移" icon={icons.shift} />
          <Sep />
          <Split label="技术指标" icon={icons.indicator} />
          <Split label="时间周期" icon={icons.clock} />
          <Split label="模板" icon={icons.template} />
        </div>
        <div className="flex items-center gap-[3px] border-r border-b border-[#a0a0a0] pr-[2px]">
          <Grip />
          {["M1", "M5", "M15", "M30", "H1", "H4", "D1", "W1", "MN"].map((frame) => (
            <button
              key={frame}
              type="button"
              className={
                frame === "H4"
                  ? "h-6 w-[25px] border border-[#a0a0a0] border-r-white border-b-white bg-[#f8f8f8] text-[10px] text-[#444]"
                  : "h-6 w-[25px] text-[10px] text-[#444]"
              }
            >
              {frame}
            </button>
          ))}
        </div>
        <div className="mr-px ml-auto flex h-[26px]">
          <label className="flex w-[170px] items-center border border-t-0 border-[#b0b0b0] bg-white pr-1">
            <input type="search" aria-label="搜索" className="min-w-0 flex-1 bg-transparent text-[11px] outline-none" />
            <Svg w={14} h={14}><circle cx="8.500" cy="5" r="4" fill="#eef5ff" stroke="#3a72cc" strokeWidth="1.500" /><path d="M6 8l-4.500 5" stroke="#1c4fae" strokeWidth="2.500" /></Svg>
          </label>
          <button type="button" aria-label="消息 5" className="flex w-8 flex-col items-center justify-center border-b border-[#b0b0b0] bg-[linear-gradient(180deg,#eee,#d4d4d4)]">
            <span className="flex h-[13px] w-4 items-center justify-center rounded-xs bg-[#5b7fb5] text-[10px] leading-none font-bold text-white">5</span>
            <Svg w={8} h={4}><path d="M0 0h4v4z" fill="#5b7fb5" /></Svg>
          </button>
        </div>
      </div>
      <div className="flex h-[26px]">
        <div className="flex items-center gap-[3px] border-r border-[#a0a0a0] pr-[3px]">
          <Grip />
          <Tool label="光标" icon={icons.cursor} pressed />
          <Tool label="十字准线" icon={icons.crosshair} />
          <Sep />
          <Tool label="垂直线" icon={icons.vline} />
          <Tool label="水平线" icon={icons.hline} />
          <Tool label="趋势线" icon={icons.diag} />
          <Tool label="等距通道" icon={icons.channel} />
          <Tool label="斐波那契回调" icon={icons.fibo} />
          <button type="button" className="h-6 w-[25px] text-[13px] font-semibold text-[#555]">A</button>
          <Tool label="文字标签" icon={icons.label} />
          <Split label="箭头" icon={icons.arrows} />
        </div>
      </div>
    </div>
  );
}

function ScrollBar({ thumb }: { thumb: string }) {
  return (
    <div className="flex w-4 shrink-0 flex-col items-center bg-[#f0f0f0]">
      <button type="button" aria-label="向上滚动" className="flex h-[17px] w-4 shrink-0 items-center justify-center"><Svg w={7} h={4}><path d="M0 4h7L3.500 0z" fill="#555" /></Svg></button>
      <div className="flex min-h-0 w-full flex-1 flex-col items-center">
        <div className={thumb}><Svg w={7} h={8}><path d="M0 .5h7M0 3.500h7M0 6.500h7" stroke="#555" /></Svg></div>
      </div>
      <button type="button" aria-label="向下滚动" className="flex h-[17px] w-4 shrink-0 items-center justify-center"><Svg w={7} h={4}><path d="M0 0h7L3.500 4z" fill="#555" /></Svg></button>
    </div>
  );
}

const Direction = ({ up }: { up: boolean }) => (
  <Svg w={12} h={12}>
    {up
      ? <path d="M6 1l5 5H8.500v4h-5V6H1z" fill="#2cc832" stroke="#0a6a14" />
      : <path d="M6 11l5-5H8.500V2h-5v4H1z" fill="#f2622a" stroke="#9a2a08" />}
  </Svg>
);

function MarketWatch() {
  const head = "border-r border-[#e0e0e0] font-normal text-[12px]";
  return (
    <section className="ml-[3px] w-[262px] shrink-0" aria-label="市场报价">
      <div className="flex h-4 items-center justify-between pr-[2px]">
        <h2 className="w-[248px] bg-[linear-gradient(90deg,#c3cedb,#d5e3f2)] pl-[3px] text-[12px] leading-[15px] text-[#4a5560]">市场报价: 05:54:41</h2>
        <CloseX />
      </div>
      <div className="flex h-[351px] overflow-hidden border-t border-l border-[#a0a0a0] bg-white pr-px">
        <div className="min-w-0 flex-1 overflow-hidden">
          <table className="w-full table-fixed border-separate border-spacing-0 text-[11px]">
            <thead>
              <tr className="h-6 bg-[linear-gradient(180deg,#fff_40%,#f1f3f6)]">
                <th className={`${head} w-[104px] pl-[6px] text-left`}>交易品种</th>
                <th className={`${head} w-[69px] pr-[4px] text-right`}>卖价</th>
                <th className={`${head} pr-[5px] text-right`}>买价</th>
              </tr>
            </thead>
            <tbody>
              {QUOTES.map(([symbol, bid, ask, up], i) => {
                const cell = "h-5 border-b border-[#c0c0c0] py-0 leading-[19px]";
                const price = i === 0 ? "text-white" : up ? "text-[#0000ff]" : "text-[#ff0000]";
                return (
                  <tr key={i} className={i === 0 ? "bg-[#3399ff]" : "bg-[#f0fff0]"}>
                    <td className={`${cell} border-r pl-[4px]`}>
                      <span className={i === 0 ? "flex items-center gap-1 text-white" : "flex items-center gap-1 text-[#a0a0a0]"}>
                        <Direction up={up} />
                        {symbol}
                      </span>
                    </td>
                    <td className={`${cell} border-r pr-[2px] text-right ${price}`}>{bid}</td>
                    <td className={`${cell} pr-[3px] text-right ${price}`}>{ask}</td>
                  </tr>
                );
              })}
            </tbody>
          </table>
        </div>
        <ScrollBar thumb="mt-3 flex h-[54px] w-[15px] items-center justify-center rounded-xs border border-[#979797] bg-[linear-gradient(90deg,#f5f5f5,#e4e4e6_48%,#cfcfd2_52%,#c3c3c8)]" />
      </div>
      <div className="flex h-[19px] border-t border-black pl-[3px] text-[12px] leading-[17px]">
        <button type="button" className="-mt-px w-[68px] border border-t-0 border-black bg-white">交易品种</button>
        <button type="button" className="ml-[10px] text-[#707070]">即时图</button>
        <span className="mt-1 ml-[11px] h-3 w-px bg-[#707070]" />
      </div>
    </section>
  );
}

function Navigator() {
  return (
    <section className="flex w-[32px] shrink-0 flex-col border-x border-[#b0b0b0] pl-[4px]" aria-label="导航">
      <div className="flex h-4 items-center justify-between pr-[4px]">
        <h2 className="h-[14px] w-[9px] overflow-hidden bg-[#c3cedb] text-[12px] leading-[14px] text-[#4a5560]">导航</h2>
        <CloseX />
      </div>
      <div className="flex h-[351px] justify-end border-t border-l border-[#a0a0a0] bg-white pr-[4px]">
        <ScrollBar thumb="mt-px flex h-[270px] w-[15px] items-center justify-center rounded-xs border border-[#979797] bg-[linear-gradient(90deg,#e8e8ea,#dcdcdf_48%,#cbcbcf_52%,#c6c6cb)]" />
      </div>
      <div className="h-[19px] overflow-hidden border-t border-black pl-[2px]">
        <button type="button" className="-mt-px h-[18px] w-[22px] overflow-hidden border border-t-0 border-r-0 border-black bg-white pl-[9px] text-left text-[12px] leading-[17px]">常</button>
      </div>
    </section>
  );
}

function CandleChart() {
  const y = (value: number) => (value - 30) / 3;
  const base = 347;
  return (
    <svg className="block h-[347px] w-full" shapeRendering="crispEdges" role="img" aria-label="USDCADpro,H4">
      {Array.from({ length: 60 }, (_, i) => (
        <line key={`v${i}`} x1={32 * (i + 1) + 0.5} x2={32 * (i + 1) + 0.5} y1="3" y2={base} stroke="#303030" strokeDasharray="5 4" />
      ))}
      {PRICES.map((price, i) => (
        <line key={price} x1="1" x2="100%" y1={14.5 + 33 * i} y2={14.5 + 33 * i} stroke="#303030" strokeDasharray="5 4" />
      ))}
      <line x1="0" x2="100%" y1="230.500" y2="230.500" stroke="#3a3a3a" />
      {CANDLES.map(([, , , , , volume], i) => (
        <rect key={i} x={8 * i} y={y(volume)} width="1" height={base - y(volume)} fill="#98ae0c" />
      ))}
      <polyline points={AVERAGE.map(([i, v]) => `${8 * i},${y(v)}`).join(" ")} fill="none" stroke="#f00000" />
      {CANDLES.map(([kind, high, top, bottom, low], i) => (
        <g key={i} fill={kind === "u" ? "#98ae0c" : "#e2e2e2"}>
          <rect x={8 * i} y={y(high)} width="1" height={(low - high) / 3} />
          <rect x={8 * i - 2} y={y(top)} width="5" height={Math.max(1, (bottom - top) / 3)} />
        </g>
      ))}
    </svg>
  );
}

function SpeedWidget() {
  return (
    <div className="absolute right-[53px] bottom-0 flex items-center">
      <div className="-mr-6 flex h-[42px] w-[82px] flex-col justify-between rounded-l-full bg-[#303030]/90 py-[3px] pl-[9px] text-[11px] leading-[15px] text-[#e4e4e4]">
        <p className="flex items-center"><Svg w={8} h={8}><path d="M4 0l4 4H5.500v4h-3V4H0z" fill="#f08a1a" /></Svg><span className="w-[40px] text-right">46<span className="text-[#909090]">K/s</span></span></p>
        <p className="flex items-center"><Svg w={8} h={8}><path d="M4 8l4-4H5.500V0h-3v4H0z" fill="#2fb81a" /></Svg><span className="w-[40px] text-right">3.7<span className="text-[#909090]">K/s</span></span></p>
      </div>
      <div className="relative flex size-[60px] items-center justify-center rounded-full border border-[#484848] bg-[#303030] text-[#dcdcdc]">
        <svg viewBox="0 0 60 60" className="absolute inset-0" aria-hidden="true">
          <defs><linearGradient id="arc" x1="0" y1="0" x2="0" y2="1"><stop offset="0" stopColor="#18c818" /><stop offset=".6" stopColor="#6cc818" /><stop offset="1" stopColor="#c8c818" /></linearGradient></defs>
          <path d="M29 4a26 26 0 0 1 23 38" fill="none" stroke="url(#arc)" strokeWidth="1.500" />
        </svg>
        <span className="text-[26px] leading-none font-light [font-family:'Open_Sans','Noto_Sans',sans-serif]">32</span>
        <span className="mt-3 text-[10px]">%</span>
      </div>
    </div>
  );
}

function ChartWindow() {
  return (
    <section className="min-w-0 flex-1" aria-label="图表">
      <div className="relative mr-[2px] border-t border-l border-[#808080] bg-[#131313] pt-[2px] pl-[2px] text-[9px] text-white">
        <div className="flex">
          <div className="relative min-w-0 flex-1 border border-[#fff8ee]">
            <CandleChart />
            <p className="absolute top-[2px] left-1 flex items-center gap-[6px] leading-3"><Svg w={7} h={4}><path d="M0 0h7L3.500 4z" fill="#fff" /></Svg><span>USDCADpro,H4&nbsp; 1.30249 1.30471 1.30191 1.30427</span></p>
          </div>
          <div className="relative h-[349px] w-[42px] shrink-0">
            <div className="-mt-[2px]">
              {PRICES.map((price) => (
                <p key={price} className="flex h-[33px] items-center"><span className="mr-[3px] h-px w-[2px] bg-white" />{price}</p>
              ))}
            </div>
            <p className="absolute top-[225px] right-0 left-px h-3 bg-[#fff8ee] pl-1 leading-3 text-black">1.30427</p>
          </div>
        </div>
        <div className="flex h-[18px] overflow-hidden">
          {DATES.map((date) => (
            <span key={date} className="flex w-16 shrink-0 flex-col whitespace-nowrap">
              <span className="ml-px h-[3px] w-px bg-white" />
              <span className="leading-3">{date}</span>
            </span>
          ))}
        </div>
        <SpeedWidget />
      </div>
      <div className="mt-px flex h-[20px] overflow-hidden border-t border-black bg-[#efefef] pl-px text-[10px] leading-[17px]">
        {CHART_TABS.map(([name, width], i) => (
          <button
            key={i}
            type="button"
            className={
              name === "USDCADpro,H4"
                ? `${width} -mt-px h-[19px] shrink-0 border border-t-0 border-black bg-white text-black`
                : `${width} flex shrink-0 items-center justify-between text-[#707070]`
            }
          >
            {name === "USDCADpro,H4" ? name : <><span className="flex-1">{name}</span>{i !== 3 && i !== 16 && <span className="h-3 w-px bg-[#707070]" />}</>}
          </button>
        ))}
        <span className="mr-[8px] ml-auto flex items-center gap-[12px]">
          <button type="button" aria-label="上一个"><Svg w={4} h={7}><path d="M4 0v7L0 3.500z" fill="#000" /></Svg></button>
          <button type="button" aria-label="下一个"><Svg w={4} h={7}><path d="M0 0v7l4-3.500z" fill="#000" /></Svg></button>
        </span>
      </div>
    </section>
  );
}

const OrderIcon = ({ buy }: { buy: boolean }) => (
  <Svg w={16} h={17}>
    <path d="M1.500 1.500h8l3 3v11h-11z" fill="#fdfdfd" stroke="#666" />
    <path d="M9.500 1.500v3h3" fill="#ccc" stroke="#444" />
    <circle cx="12" cy="12.500" r="3" fill={buy ? "#2a9be8" : "#f0501e"} stroke={buy ? "#0a5fa8" : "#a82a08"} />
  </Svg>
);

const TERMINAL_TABS = ["展示", "账户历史", "新闻", "警报", "邮箱", "市场", "信号", "代码库", "EA交易", "日志"];

function Terminal() {
  return (
    <section className="flex border-t border-white pt-[3px]" aria-label="终端">
      <div className="flex w-[15px] shrink-0 flex-col">
        <button type="button" aria-label="关闭终端" className="flex h-3 items-center justify-center"><CloseX /></button>
        <div className="ml-px flex w-[13px] flex-1 items-end justify-center bg-[linear-gradient(180deg,#bcd2ee,#9cb4d0)]">
          <h2 className="rotate-180 text-[12px] leading-[13px] text-black [text-orientation:sideways] [writing-mode:vertical-rl]">终端</h2>
        </div>
      </div>
      <div className="min-w-0 flex-1">
        <div className="flex border-t border-l border-[#a0a0a0] bg-white">
          <div className="min-w-0 flex-1">
            <table className="w-full table-fixed border-separate border-spacing-0 text-[11px]">
              <thead>
                <tr className="bg-[linear-gradient(180deg,#fff_35%,#f1f3f6_36%,#f4f6f8)]">
                  {COLUMNS.map(([name, width], i) => (
                    <th
                      key={i}
                      className={`${width} h-[25px] border-r border-b border-r-[#e0e0e0] border-b-[#c0c0c0] py-0 text-[12px] font-normal ${i === 0 ? "pl-[6px] text-left" : i === 3 ? "pr-[8px] text-right" : i === 12 ? "pr-[6px] text-right" : "pr-[4px] text-right"}`}
                    >
                      {i === 3 ? <span className="flex items-center justify-end gap-[10px]">手数<Svg w={5} h={9}><path d="M0 9l4-9" stroke="#888" /></Svg></span> : name}
                    </th>
                  ))}
                </tr>
              </thead>
              <tbody>
                {ORDERS.map((row, r) => (
                  <tr key={row[0]} className={r % 2 ? "bg-[#ebebeb]" : "bg-white"}>
                    {row.map((value, c) => {
                      const cell = "h-5 border-b border-[#c0c0c0] p-0 leading-[19px]";
                      if (c === 0)
                        return <td key={c} className={`${cell} border-r pl-[2px]`}><span className="flex items-center gap-[3px]"><OrderIcon buy={row[2] === "buy"} />{value}</span></td>;
                      if (c === 11)
                        return (
                          <td key={c} className={`${cell} border-r`}>
                            <span className="flex items-center justify-end gap-[9px] pr-[4px]">
                              {value}
                              <button type="button" aria-label={`平仓 ${row[0]}`}><Svg w={8} h={8}><path d="M1 1l6 6M7 1L1 7" stroke="#999" strokeWidth="2" /></Svg></button>
                            </span>
                          </td>
                        );
                      if (c === 12) return <td key={c} className={`${cell} pr-[4px] text-right`}>{value}</td>;
                      if (c === 7 && row[2] === "buy")
                        return <td key={c} className={`${cell} border-r text-right`}><span className="mr-px ml-px block bg-[#60f060] pr-px leading-[18px]">{value}</span></td>;
                      return <td key={c} className={`${cell} border-r pr-[2px] text-right`}>{value}</td>;
                    })}
                  </tr>
                ))}
              </tbody>
              <tfoot>
                <tr className="bg-[#c6c6c6] font-bold">
                  <td colSpan={11} className="h-5 p-0 pl-[2px] leading-5 whitespace-nowrap">
                    <span className="flex items-center gap-[5px]">
                      <Svg w={14} h={14}><rect x="1" y=".5" width="11" height="13" fill="#fff" stroke="#777" /><path d="M6.500 11l3.500-4H8V3H5v4H3z" fill="#f0501e" stroke="#a82a08" strokeWidth=".6" /></Svg>
                      <span className="whitespace-pre">余额: 112 155.04 USD  净值: 112 081.51  已用预付款: 524.70  可用预付款: 111 556.81  预付款比例: 21361.21%</span>
                    </span>
                  </td>
                  <td className="p-0 pr-[22px] text-right leading-5">-73.53</td>
                  <td className="p-0" />
                </tr>
              </tfoot>
            </table>
          </div>
          <div className="mr-[5px] flex bg-[#f0f0f0]">
            <ScrollBar thumb="mt-[117px] flex h-[332px] w-[15px] items-center justify-center rounded-xs border border-[#979797] bg-[linear-gradient(90deg,#f5f5f5,#e4e4e6_48%,#cfcfd2_52%,#c3c3c8)]" />
          </div>
        </div>
        <div className="flex h-5 items-start border-t border-black pl-[3px] text-[12px] leading-[18px] text-[#707070]">
          <button type="button" className="-mt-px h-[18px] w-[43px] border border-t-0 border-black bg-white text-black">交易</button>
          {TERMINAL_TABS.map((tab) => (
            <span key={tab} className="flex items-center">
              <button type="button" className={tab === "展示" ? "pr-[10px] pl-[10px]" : "pr-[10px] pl-[9px]"}>
                {tab}
                {tab === "新闻" && <sub className="bottom-0 ml-[2px] text-[9px] font-bold text-[#ff0000]">99</sub>}
              </button>
              <span className="h-3 w-px bg-[#707070]" />
            </span>
          ))}
        </div>
      </div>
    </section>
  );
}

function StatusBar() {
  const cells = ["w-[118px]", "w-[82px]", "w-[80px]", "w-[79px]", "w-[79px]", "w-[79px]"];
  return (
    <footer className="relative mt-[3px] flex h-[22px] items-center border-t border-[#a0a0a0] text-[11px]">
      <p className="flex-1 pt-1 pl-[2px] leading-[14px]">寻求帮助,请按F1键</p>
      <p className="absolute -top-[2px] left-0 flex items-baseline gap-[5px] text-[#707478]">
        <span className="text-[20px] leading-5 italic">韬客外汇</span>
        <span className="text-[14px] leading-4 font-medium">talkforex.com</span>
      </p>
      <p className="h-4 w-[134px] border-l border-[#a0a0a0] pl-[5px] leading-4">Default</p>
      {cells.map((width, i) => <span key={i} className={`${width} h-4 border-l border-[#a0a0a0]`} />)}
      <div className="flex h-4 w-[162px] items-center border-l border-[#a0a0a0] pl-[5px]">
        <Svg w={24} h={13}>
          {Array.from({ length: 8 }, (_, i) => (
            <g key={i}><rect x={3 * i} y="0" width="2" height={9 - i} fill="#6a8a10" /><rect x={3 * i} y={10 - i} width="2" height={3 + i} fill="#0f3f5f" /></g>
          ))}
        </Svg>
        <span className="ml-[33px]">4685/8 kb</span>
        <span className="ml-auto self-end"><Svg w={14} h={14}><path d="M0 14L14 0M5 14l9-9M10 14l4-4" stroke="#999" strokeWidth="1.500" /></Svg></span>
      </div>
    </footer>
  );
}

export default function App() {
  return (
    <div className="flex min-h-screen flex-col bg-[#6f7478] text-black [font-family:'Noto_Sans','Noto_Sans_CJK_SC',sans-serif]">
      <div className="ml-[3px] flex flex-1 flex-col">
        <TitleBar />
        <div className="flex flex-1 border-x border-[#2f3a44] bg-[linear-gradient(180deg,#c4d6ea_0%,#dbe8f6_22%,#a9cbee_23%,#a8c8ea_100%)] pr-[6px] pb-[2px] pl-[5px]">
          <main className="flex min-w-0 flex-1 flex-col border border-[#5a6f88] bg-[#efefef]">
            <MenuBar />
            <Toolbars />
            <div className="flex">
              <MarketWatch />
              <span className="w-[3px]" />
              <Navigator />
              <ChartWindow />
            </div>
            <Terminal />
            <StatusBar />
          </main>
        </div>
      </div>
    </div>
  );
}
